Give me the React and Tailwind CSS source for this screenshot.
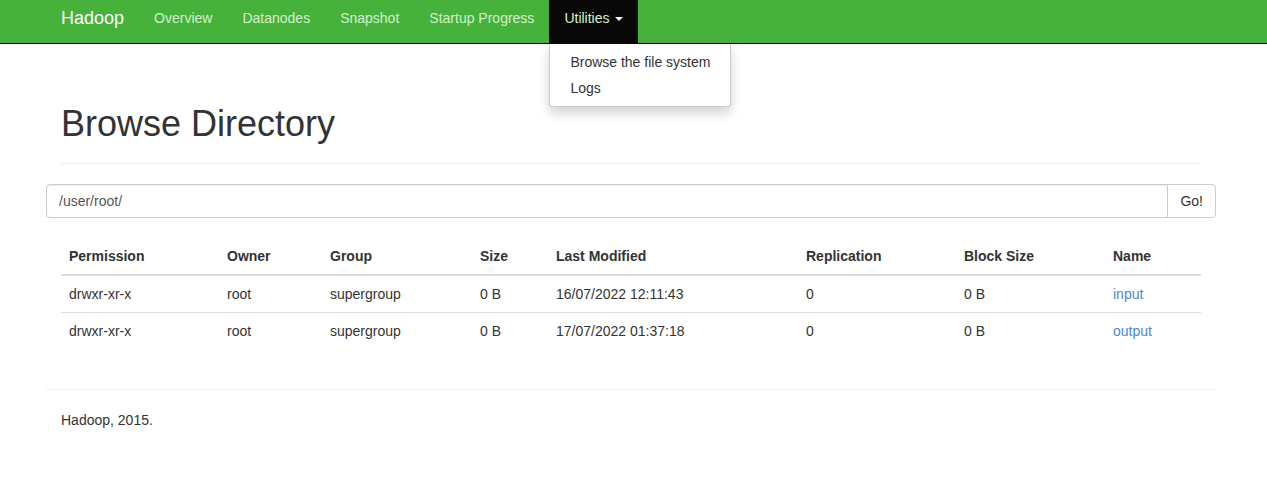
import React from "react";

const links = ["Overview", "Datanodes", "Snapshot", "Startup Progress"];

const columns = [
  { label: "Permission", width: "w-[158px]" },
  { label: "Owner", width: "w-[103px]" },
  { label: "Group", width: "w-[150px]" },
  { label: "Size", width: "w-[76px]" },
  { label: "Last Modified", width: "w-[250px]" },
  { label: "Replication", width: "w-[158px]" },
  { label: "Block Size", width: "w-[149px]" },
  { label: "Name", width: "w-[96px]" },
];

const rows = [
  ["drwxr-xr-x", "root", "supergroup", "0 B", "16/07/2022 12:11:43", "0", "0 B", "input"],
  ["drwxr-xr-x", "root", "supergroup", "0 B", "17/07/2022 01:37:18", "0", "0 B", "output"],
];

function Navbar() {
  return (
    <header className="border-b border-[#080808] bg-[#46b13b] pr-[5px]">
      <nav className="mx-auto flex h-[43px] max-w-[1170px] items-stretch">
        <a href="#home" className="flex items-center px-[15px] pb-[7px] text-lg leading-5 text-white">
          Hadoop
        </a>
        {links.map((label) => (
          <a key={label} href="#tab" className="flex items-center px-[15px] pb-[7px] text-[#d2f2cf]">
            {label}
          </a>
        ))}
        <div className="relative flex">
          <button type="button" aria-expanded="true" className="flex items-center gap-[5px] bg-[#080808] px-[15px] pb-[7px] text-[#d2f2cf]">
            Utilities
            <span className="mt-0.5 border-x-4 border-t-4 border-x-transparent border-t-white" />
          </button>
          <ul className="absolute top-full left-0 mt-px w-max rounded-b border border-t-0 border-black/20 bg-white py-[5px] shadow-[0_6px_12px_rgba(0,0,0,0.18)]">
            <li>
              <a href="#explorer" className="block px-5 py-[3px]">Browse the file system</a>
            </li>
            <li>
              <a href="#logs" className="block px-5 py-[3px]">Logs</a>
            </li>
          </ul>
        </div>
      </nav>
    </header>
  );
}

export default function App() {
  return (
    <div className="font-['Liberation_Sans',Arial,sans-serif] text-sm leading-5 text-[#333]">
      <Navbar />
      <div className="pr-[5px]">
        <main className="mx-auto max-w-[1170px] pt-[60px]">
          <div className="mx-[15px] border-b border-[#eee] pb-[19px]">
            <h1 className="text-4xl leading-10">Browse Directory</h1>
          </div>
          <form className="mt-5 flex h-[34px]" onSubmit={(e) => e.preventDefault()}>
            <input
              type="text"
              aria-label="Directory"
              defaultValue="/user/root/"
              className="min-w-0 flex-1 rounded-l border border-[#ccc] px-3 text-[#555] shadow-[inset_0_1px_1px_rgba(0,0,0,0.075)]"
            />
            <button type="submit" className="-ml-px rounded-r border border-[#ccc] bg-white px-3">
              Go!
            </button>
          </form>
          <div className="mx-[15px] mt-5">
            <table className="w-full table-fixed border-collapse text-left">
              <thead>
                <tr className="border-b-2 border-[#ddd]">
                  {columns.map((c) => (
                    <th key={c.label} className={`p-2 font-bold ${c.width}`}>{c.label}</th>
                  ))}
                </tr>
              </thead>
              <tbody>
                {rows.map((row) => (
                  <tr key={row[7]} className="border-b border-[#ddd] last:border-b-0">
                    {row.map((cell, i) => (
                      <td key={i} className="p-2">
                        {i === 7 ? <a href="#entry" className="text-[#4a87d0]">{cell}</a> : cell}
                      </td>
                    ))}
                  </tr>
                ))}
              </tbody>
            </table>
          </div>
        </main>
        <footer className="mx-auto mt-10 max-w-[1170px] border-t border-[#eee] px-[15px] py-5">
          <p>Hadoop, 2015.</p>
        </footer>
      </div>
    </div>
  );
}
